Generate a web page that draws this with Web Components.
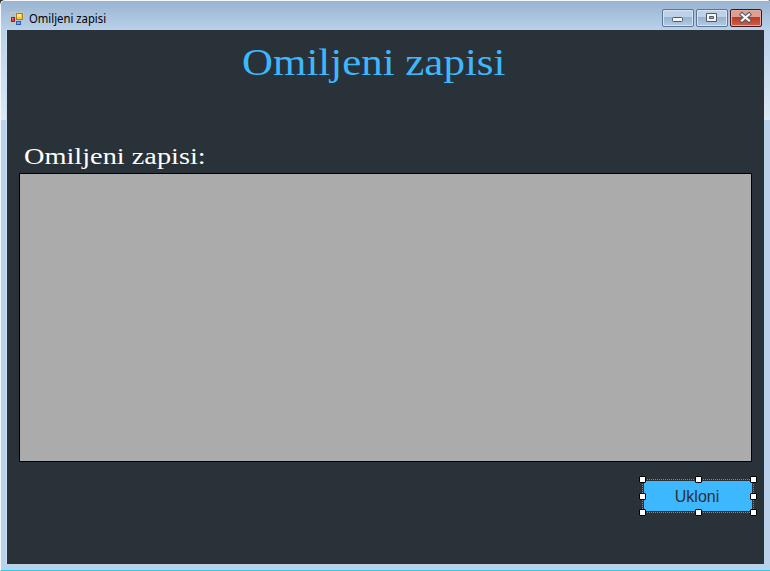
<!DOCTYPE html>
<html lang="bs"><head><meta charset="utf-8"><title>Omiljeni zapisi</title>
<style>html,body{margin:0;width:770px;height:571px;overflow:hidden;background:#2b3338}</style></head><body>
<form-window caption="Omiljeni zapisi">
<page-title>Omiljeni zapisi</page-title>
<list-label>Omiljeni zapisi:</list-label>
<data-grid></data-grid>
<selected-button>Ukloni</selected-button>
</form-window>
<script>
function define(name, html){
  const t=document.createElement('template');t.innerHTML=html;
  customElements.define(name,class extends HTMLElement{
    constructor(){super();this.attachShadow({mode:'open'}).append(t.content.cloneNode(true));}
  });
}
define('app-icon',`<style>:host{display:block;width:14px;height:14px}svg{display:block}</style>
<svg width="14" height="14" shape-rendering="crispEdges"><path d="M0 .5h13M0 13.5h13M.5 0v14M5.5 0v14M13.5 0v14" stroke="#c2c6c6" fill="none"/>
<rect x="1" y="5" width="4" height="5" fill="#a01c18"/><rect x="2" y="6" width="2" height="3" fill="#dc4a34"/><rect x="2" y="6" width="1" height="1" fill="#ff9a80"/>
<rect x="6" y="1" width="7" height="7" fill="#b07c10"/><rect x="7" y="2" width="5" height="5" fill="#ffc828"/><rect x="7" y="2" width="4" height="3" fill="#ffe98c"/>
<rect x="6" y="9" width="5" height="4" fill="#2c5cae"/><rect x="7" y="10" width="3" height="2" fill="#6aa8f4"/></svg>`);
define('window-button',`<style>:host{display:block;box-sizing:border-box;width:32px;height:18px;border:1px solid #5d7494;border-radius:2px;background:linear-gradient(#bdd2e9 0 45%,#96b2d0 45%,#b2cce6);box-shadow:inset 0 0 0 1px #d5e3f3}
:host([kind=close]){border-color:#44151c;background:linear-gradient(#dc9f92 0 45%,#b93c26 45%,#ca6248);box-shadow:inset 0 0 0 1px #e4aa9e}
svg{display:none}:host([kind=min]) .min,:host([kind=max]) .max,:host([kind=close]) .close{display:block}</style>
<svg class="min" width="30" height="16"><rect x="9.5" y="7.5" width="10" height="4" rx="1" fill="#f5f5f5" stroke="#535666"/></svg>
<svg class="max" width="30" height="16"><path fill-rule="evenodd" d="M9.5 3.5h10v8h-10zM12.5 6.5v2h4v-2z" fill="#f5f5f5" stroke="#535666" stroke-linejoin="round"/></svg>
<svg class="close" width="30" height="16"><g fill="none"><path d="M11 4.5l7 6M18 4.5l-7 6" stroke="#535666" stroke-width="4.2" stroke-linecap="square"/><path d="M11 4.5l7 6M18 4.5l-7 6" stroke="#f8f8f8" stroke-width="2.3" stroke-linecap="square"/></g></svg>`);
define('title-bar',`<style>:host{display:flex;box-sizing:border-box;align-items:flex-start;font:12px/18px "Noto Sans","Open Sans",sans-serif;color:#000}
app-icon{margin-top:3px}.t{margin:1px 0 0 5px;white-space:nowrap;transform-origin:left;transform:scaleX(.94);flex:1}.b{display:flex;gap:2px}</style>
<app-icon></app-icon><span class="t"><slot></slot></span><div class="b"><window-button kind="min"></window-button><window-button kind="max"></window-button><window-button kind="close"></window-button></div>`);
customElements.define('form-window',class extends HTMLElement{
  constructor(){super();this.attachShadow({mode:'open'}).innerHTML=`<style>:host{display:block;box-sizing:border-box;width:770px;height:571px;border-left:1px solid #f4f8fc;border-top:1px solid #f4f8fc;border-bottom:1px solid #29d0e8;border-radius:5px 2px 0 0;background:linear-gradient(#99b4d1,#b9d1ea 29px,#b9d1ea)}
title-bar{height:29px;padding:8px 8px 0 9px}.f{display:flex;height:534px}.e{width:6px;background:linear-gradient(#b9d1ea,#dce9f6 90px,#b9d1ea 90px)}.e:first-child{box-shadow:inset -1px 0 #cbdff2}
.c{width:757px;box-sizing:border-box;padding-left:12px;background:#293238;display:flex;flex-direction:column;align-items:flex-start}</style>
<title-bar></title-bar><div class="f"><div class="e"></div><div class="c"><slot></slot></div><div class="e"></div></div>`;}
  connectedCallback(){this.shadowRoot.querySelector('title-bar').textContent=this.getAttribute('caption');}
});
define('page-title',`<style>:host{display:block;height:110px;padding-left:223px;box-sizing:border-box;padding-top:9px;font:37px/48px "Liberation Serif",serif;color:#3db8ff}span{display:inline-block;white-space:nowrap;transform-origin:left;transform:scaleX(1.16)}</style><span><slot></slot></span>`);
define('list-label',`<style>:host{display:block;box-sizing:border-box;height:33px;padding:0 0 0 5px;font:24px/32px "Liberation Serif",serif;color:#fff}span{display:inline-block;white-space:nowrap;transform-origin:left;transform:scaleX(1.18)}</style><span><slot></slot></span>`);
define('data-grid',`<style>:host{display:block;box-sizing:border-box;width:733px;height:289px;border:1px solid #000;background:#ababab}</style>`);
define('selected-button',`<style>:host{display:block;position:relative;box-sizing:border-box;width:112px;height:34px;margin:17px 0 0 623px;border:1px dotted #848a8e;padding:1px;font:16px/32px "Liberation Sans",sans-serif;color:#293238}
.b{height:30px;box-sizing:border-box;padding-right:2px;background:#3db8ff;text-align:center;border-radius:1px}i{position:absolute;box-sizing:border-box;width:7px;height:7px;border:1px solid #000;border-radius:1px;background:#fff}
.l{left:-4px}.m{left:52px}.r{left:107px}.t{top:-4px}.c{top:13px}.d{top:29px}</style><div class="b"><slot></slot></div>
<i class="l t"></i><i class="m t"></i><i class="r t"></i><i class="l c"></i><i class="r c"></i><i class="l d"></i><i class="m d"></i><i class="r d"></i>`);
</script></body></html>
